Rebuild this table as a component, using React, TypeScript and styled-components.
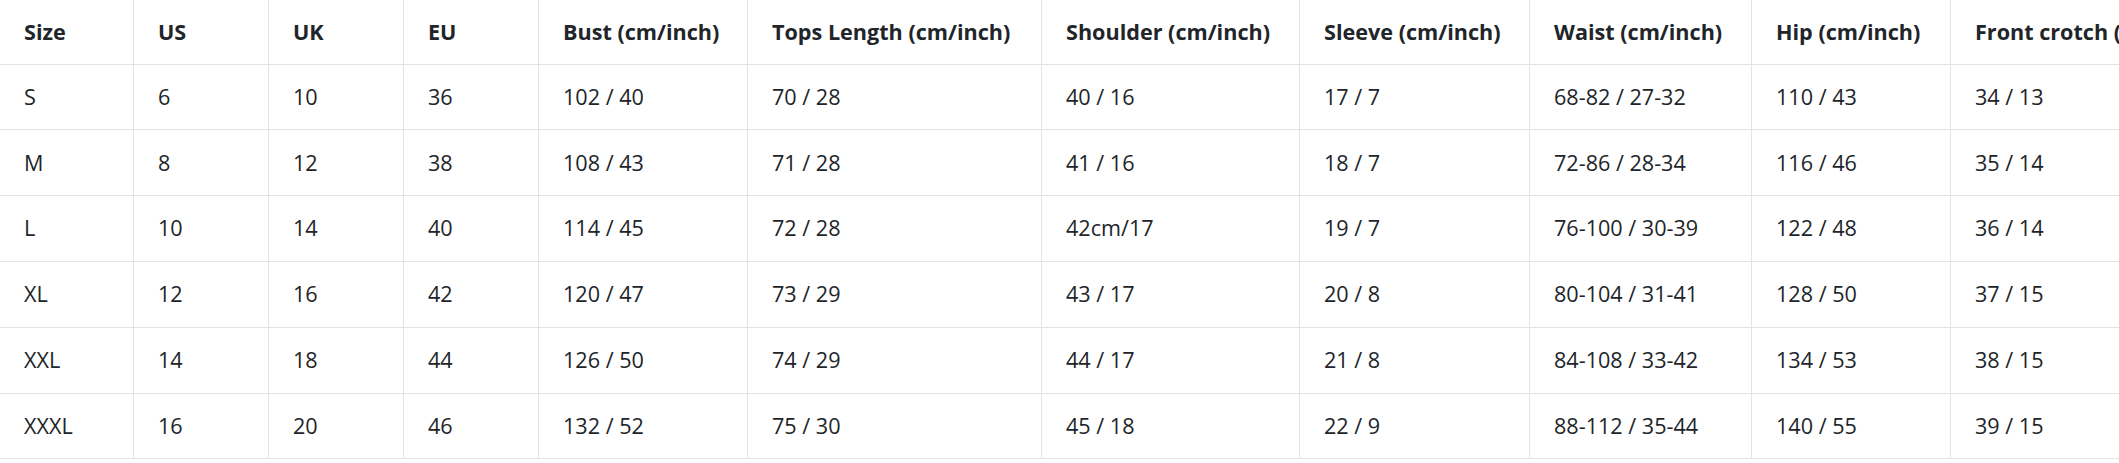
import styled, { createGlobalStyle } from "styled-components";

const GlobalStyle = createGlobalStyle`
    html, body {
        margin: 0;
        padding: 0;
        background: #ffffff;
        overflow: hidden;
    }
    body {
        font-family: "Open Sans", "Noto Sans", "Liberation Sans", sans-serif;
        color: #212529;
    }
`

const columns = [
    {title: "Size", width: 133.5},
    {title: "US", width: 135},
    {title: "UK", width: 135},
    {title: "EU", width: 135},
    {title: "Bust (cm/inch)", width: 209},
    {title: "Tops Length (cm/inch)", width: 294},
    {title: "Shoulder (cm/inch)", width: 258},
    {title: "Sleeve (cm/inch)", width: 230},
    {title: "Waist (cm/inch)", width: 222},
    {title: "Hip (cm/inch)", width: 199},
    {title: "Front crotch (cm/inch)", width: 290},
]

const rows = [
    ["S", "6", "10", "36", "102 / 40", "70 / 28", "40 / 16", "17 / 7", "68-82 / 27-32", "110 / 43", "34 / 13"],
    ["M", "8", "12", "38", "108 / 43", "71 / 28", "41 / 16", "18 / 7", "72-86 / 28-34", "116 / 46", "35 / 14"],
    ["L", "10", "14", "40", "114 / 45", "72 / 28", "42cm/17", "19 / 7", "76-100 / 30-39", "122 / 48", "36 / 14"],
    ["XL", "12", "16", "42", "120 / 47", "73 / 29", "43 / 17", "20 / 8", "80-104 / 31-41", "128 / 50", "37 / 15"],
    ["XXL", "14", "18", "44", "126 / 50", "74 / 29", "44 / 17", "21 / 8", "84-108 / 33-42", "134 / 53", "38 / 15"],
    ["XXXL", "16", "20", "46", "132 / 52", "75 / 30", "45 / 18", "22 / 9", "88-112 / 35-44", "140 / 55", "39 / 15"],
]

export default function App() {
    return (
        <>
            <GlobalStyle/>
            <StyledWrapper>
                <StyledTable>
                    <colgroup>
                        {columns.map((c) => (
                            <col key={c.title} style={{width: c.width}}/>
                        ))}
                    </colgroup>
                    <thead>
                    <tr>
                        {columns.map((c) => (
                            <HeadCell key={c.title}>{c.title}</HeadCell>
                        ))}
                    </tr>
                    </thead>
                    <tbody>
                    {rows.map((r) => (
                        <tr key={r[0]}>
                            {r.map((v, i) => (
                                <BodyCell key={i}>{v}</BodyCell>
                            ))}
                        </tr>
                    ))}
                    </tbody>
                </StyledTable>
            </StyledWrapper>
        </>
    );
}

const StyledWrapper = styled.div`
    width: 2119px;
    height: 463px;
    overflow: hidden;
`

const StyledTable = styled.table`
    border-collapse: collapse;
    table-layout: fixed;
    width: 2240.5px;
    font-size: 21.6px;
    line-height: 1.5;
    color: #212529;
`

const HeadCell = styled.th`
    text-align: left;
    font-weight: 700;
    padding: 15.5px 24px 15.8px;
    white-space: nowrap;
    overflow: hidden;
    border-bottom: 1px solid #e4e4e4;
    border-right: 1px solid #e4e4e4;
`

const BodyCell = styled.td`
    padding: 16.2px 24px;
    white-space: nowrap;
    border-bottom: 1px solid #e4e4e4;
    border-right: 1px solid #e4e4e4;
`
